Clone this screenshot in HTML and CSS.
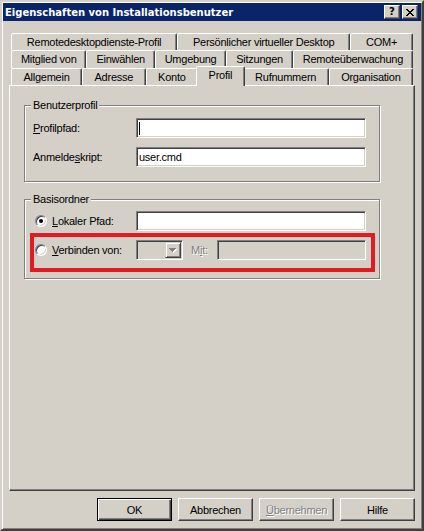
FILE: index.html
```html
<!DOCTYPE html>
<html lang="de">
<head>
<meta charset="UTF-8">
<meta name="viewport" content="width=device-width, initial-scale=1.0">
<title>Eigenschaften von Installationsbenutzer</title>
<link rel="stylesheet" href="styles.css">
</head>
<body>
<div class="window">
  <div class="titlebar">
    <span class="title">Eigenschaften von Installationsbenutzer</span>
    <button class="caption-btn help">?</button>
    <button class="caption-btn close">
      <svg width="8" height="7" viewBox="0 0 8 7" shape-rendering="crispEdges">
        <path d="M0 0h2v1H0zM6 0h2v1H6zM1 1h2v1H1zM5 1h2v1H5zM2 2h4v1H2zM3 3h2v1H3zM2 4h4v1H2zM1 5h2v1H1zM5 5h2v1H5zM0 6h2v1H0zM6 6h2v1H6z" fill="#000"/>
      </svg>
    </button>
  </div>

  <div class="content">
    <!-- three rows of tabs, the front row holds the open page -->
    <div class="tabs">
      <div class="tab-row">
        <div class="tab">Remotedesktopdienste-Profil</div>
        <div class="tab">Persönlicher virtueller Desktop</div>
        <div class="tab">COM+</div>
      </div>
      <div class="tab-row row-mid">
        <div class="tab">Mitglied von</div>
        <div class="tab">Einwählen</div>
        <div class="tab">Umgebung</div>
        <div class="tab">Sitzungen</div>
        <div class="tab">Remoteüberwachung</div>
      </div>
      <div class="tab-row">
        <div class="tab">Allgemein</div>
        <div class="tab">Adresse</div>
        <div class="tab">Konto</div>
        <div class="tab active">Profil</div>
        <div class="tab">Rufnummern</div>
        <div class="tab">Organisation</div>
      </div>
    </div>

    <div class="panel">
      <fieldset class="group group-profile">
        <legend>Benutzerprofil</legend>
        <div class="field">
          <label class="field-label"><u>P</u>rofilpfad:</label>
          <div class="edit"><span class="caret"></span></div>
        </div>
        <div class="field">
          <label class="field-label">Anmelde<u>s</u>kript:</label>
          <div class="edit">user.cmd</div>
        </div>
      </fieldset>

      <fieldset class="group group-home">
        <legend>Basisordner</legend>
        <div class="field field-local">
          <span class="radio checked"></span>
          <label class="radio-label"><u>L</u>okaler Pfad:</label>
          <div class="edit"></div>
        </div>
        <div class="field field-connect">
          <span class="radio"></span>
          <label class="radio-label"><u>V</u>erbinden von:</label>
          <div class="combo">
            <span class="combo-btn">
              <svg width="8" height="5" viewBox="0 0 8 5" shape-rendering="crispEdges">
                <path d="M1 1h7v1H1zM2 2h5v1H2zM3 3h3v1H3zM4 4h1v1H4z" fill="#fff"/>
                <path d="M0 0h7v1H0zM1 1h5v1H1zM2 2h3v1H2zM3 3h1v1H3z" fill="#808080"/>
              </svg>
            </span>
          </div>
          <label class="disabled-label">M<u>i</u>t:</label>
          <div class="edit disabled edit-mit"></div>
        </div>
      </fieldset>
    </div>

    <div class="buttons">
      <button class="btn default">OK</button>
      <button class="btn">Abbrechen</button>
      <button class="btn" disabled><u>Ü</u>bernehmen</button>
      <button class="btn">Hilfe</button>
    </div>
  </div>
</div>
</body>
</html>
```

FILE: styles.css
```css
body {
  margin: 0;
  background-color: #D4D0C8;
  font-family: "Liberation Sans", Arial, sans-serif;
  font-size: 11px;
  letter-spacing: -0.25px;
  color: #000;
}

/* window frame */
.window {
  width: 424px;
  height: 531px;
  box-sizing: border-box;
  padding: 1px;
  border: 2px solid;
  border-color: #D4D0C8 #404040 #404040 #D4D0C8;
  box-shadow: inset 1px 1px #fff, inset -1px -1px #808080;
  display: flex;
  flex-direction: column;
}
.titlebar {
  height: 18px;
  display: flex;
  align-items: center;
  padding: 0 3px 0 2px;
  background-color: #0A246A;
}
.title {
  flex: 1;
  color: #fff;
  font-family: "DejaVu Sans", sans-serif;
  font-weight: bold;
  font-size: 10px;
  letter-spacing: 0;
  white-space: nowrap;
}
.caption-btn {
  width: 16px;
  height: 14px;
  margin-left: 2px;
  padding: 0;
  box-sizing: border-box;
  display: flex;
  align-items: center;
  justify-content: center;
  background-color: #D4D0C8;
  border: 1px solid;
  border-color: #fff #404040 #404040 #fff;
  box-shadow: inset -1px -1px #808080;
  font-family: "DejaVu Sans", sans-serif;
  font-weight: bold;
  font-size: 10px;
  line-height: 1;
  color: #000;
}

.content {
  flex: 1;
  display: flex;
  flex-direction: column;
  padding: 12px 6px 0 6px;
}

/* tabs */
.tabs {
  padding: 0 2px;
}
.tab-row {
  display: flex;
  height: 17px;
}
.tab-row.row-mid {
  height: 18px;
}
.tab {
  flex: 1 1 auto;
  box-sizing: border-box;
  padding: 2px 6px 0;
  line-height: 13px;
  text-align: center;
  white-space: nowrap;
  background-color: #D4D0C8;
  border: 1px solid;
  border-bottom: none;
  border-color: #fff #404040 transparent #fff;
  border-radius: 2px 2px 0 0;
  box-shadow: inset -1px 0 #808080;
}
.tab.active {
  position: relative;
  z-index: 1;
  height: 20px;
  margin: -2px -2px -1px;
}

.panel {
  height: 406px;
  box-sizing: border-box;
  padding: 13px 0 0 14px;
  border: 1px solid;
  border-color: #fff #404040 #404040 #fff;
  box-shadow: inset -1px -1px #808080;
}

/* group boxes */
.group {
  width: 356px;
  box-sizing: border-box;
  margin: 0;
  padding: 6px 0 14px 8px;
  border: 1px solid #808080;
  box-shadow: 1px 1px #fff, inset 1px 1px #fff;
}
.group legend {
  margin-left: -2px;
  padding: 0 2px;
  line-height: 13px;
  background-color: #D4D0C8;
}
.group-home {
  margin-top: 11px;
  padding: 5px 0 6px 5px;
}
.group-home legend {
  margin-left: 1px;
}

.field {
  display: flex;
  align-items: center;
  height: 20px;
}
.field + .field {
  margin-top: 9px;
}
.field-label {
  width: 103px;
}
.field-local {
  margin-left: 5px;
}
.field-connect {
  width: 345px;
  height: auto;
  box-sizing: border-box;
  padding: 3px 5px 8px 1px;
  border: 4px solid #E11B22;
}
.field + .field-connect {
  margin-top: 2px;
}
.radio-label {
  width: 84px;
  margin-left: 5px;
}
.disabled-label {
  width: 26px;
  margin-left: 8px;
  color: #808080;
  text-shadow: 1px 1px #fff;
}

/* edit boxes */
.edit {
  width: 230px;
  height: 20px;
  box-sizing: border-box;
  padding-left: 2px;
  line-height: 18px;
  display: flex;
  align-items: center;
  background-color: #fff;
  border: 1px solid;
  border-color: #808080 #fff #fff #808080;
  box-shadow: inset 1px 1px #404040, inset -1px -1px #D4D0C8;
}
.edit.disabled {
  background-color: #D4D0C8;
}
.edit-mit {
  width: 149px;
}
.caret {
  width: 1px;
  height: 13px;
  background-color: #000;
}

.combo {
  width: 47px;
  height: 20px;
  box-sizing: border-box;
  padding: 1px;
  display: flex;
  justify-content: flex-end;
  background-color: #D4D0C8;
  border: 1px solid;
  border-color: #808080 #fff #fff #808080;
  box-shadow: inset 1px 1px #404040, inset -1px -1px #D4D0C8;
}
.combo-btn {
  width: 16px;
  height: 16px;
  box-sizing: border-box;
  display: flex;
  align-items: center;
  justify-content: center;
  border: 1px solid;
  border-color: #D4D0C8 #404040 #404040 #D4D0C8;
  box-shadow: inset 1px 1px #fff, inset -1px -1px #808080;
}

/* radio buttons */
.radio {
  flex: none;
  position: relative;
  width: 12px;
  height: 12px;
  box-sizing: border-box;
  border-radius: 50%;
  background-color: #fff;
  border: 1px solid;
  border-color: #808080 #fff #fff #808080;
  box-shadow: inset 1px 1px #404040, inset -1px -1px #D4D0C8;
}
.radio.checked::after {
  content: "";
  position: absolute;
  left: 3px;
  top: 3px;
  width: 4px;
  height: 4px;
  border-radius: 50%;
  background-color: #000;
}

/* dialog buttons */
.buttons {
  display: flex;
  justify-content: flex-end;
  gap: 6px;
  margin-top: 7px;
}
.btn {
  width: 75px;
  height: 23px;
  padding: 0;
  font: inherit;
  letter-spacing: inherit;
  color: #000;
  background-color: #D4D0C8;
  border: 1px solid;
  border-color: #fff #404040 #404040 #fff;
  box-shadow: inset -1px -1px #808080, inset 1px 1px #D4D0C8;
}
.btn.default {
  border-color: #000;
  box-shadow: inset 1px 1px #fff, inset -1px -1px #404040, inset -2px -2px #808080;
}
.btn:disabled {
  color: #808080;
  text-shadow: 1px 1px #fff;
}
```
